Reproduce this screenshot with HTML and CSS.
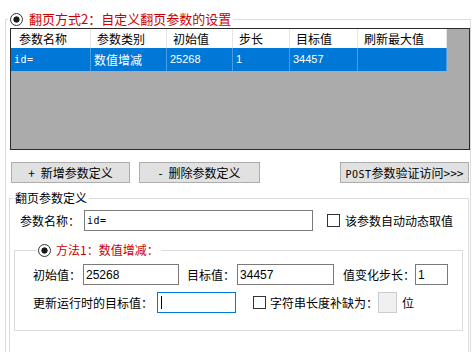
FILE: index.html
```html
<!DOCTYPE html>
<html lang="zh-CN">
<head>
    <meta charset="UTF-8">
    <title>翻页参数设置</title>
    <link rel="stylesheet" href="styles.css">
</head>
<body>
    <fieldset class="mode">
        <legend><span class="opt"><span class="radio"></span><span class="red title">翻页方式2：自定义翻页参数的设置</span></span></legend>

        <div class="list">
            <div class="row head">
                <div class="c c1">参数名称</div>
                <div class="c c2">参数类别</div>
                <div class="c c3">初始值</div>
                <div class="c c4">步长</div>
                <div class="c c5">目标值</div>
                <div class="c c6">刷新最大值</div>
            </div>
            <div class="row sel">
                <div class="c c1 mono">id=</div>
                <div class="c c2">数值增减</div>
                <div class="c c3 num">25268</div>
                <div class="c c4 num">1</div>
                <div class="c c5 num">34457</div>
                <div class="c c6"></div>
            </div>
        </div>

        <div class="buttons">
            <button class="btn add"><span class="dash">+</span>新增参数定义</button>
            <button class="btn del"><span class="dash">-</span>删除参数定义</button>
            <button class="btn post"><span class="mono">POST</span>参数验证访问&gt;&gt;&gt;</button>
        </div>

        <fieldset class="def">
            <legend>翻页参数定义</legend>
            <div class="name-row">
                <span>参数名称：</span>
                <div class="input name mono">id=</div>
                <span class="check"></span>
                <span class="check-label">该参数自动动态取值</span>
            </div>

            <fieldset class="method">
                <legend><span class="opt"><span class="radio"></span><span class="red">方法1：数值增减：</span></span></legend>
                <div class="frow">
                    <span>初始值：</span>
                    <div class="input v1">25268</div>
                    <span class="l2">目标值：</span>
                    <div class="input v2">34457</div>
                    <span class="l3">值变化步长：</span>
                    <div class="input v3">1</div>
                </div>
                <div class="frow second">
                    <span>更新运行时的目标值：</span>
                    <div class="input focus"><span class="caret"></span></div>
                    <span class="check pad"></span>
                    <span class="check-label">字符串长度补缺为：</span>
                    <div class="input off"></div>
                    <span class="unit">位</span>
                </div>
            </fieldset>
        </fieldset>
    </fieldset>
</body>
</html>
```

FILE: styles.css
```css
body {
    margin: 0;
    width: 474px;
    height: 352px;
    overflow: hidden;
    background: #fff;
    color: #000;
    font-family: "Noto Sans CJK SC", "Liberation Sans", sans-serif;
    font-size: 12px;
    line-height: 16px;
}
fieldset {
    margin: 0;
    padding: 0;
    min-width: 0;
    border: 1px solid #dcdcdc;
}
legend {
    padding: 0 2px;
    line-height: 16px;
}
.opt {
    display: inline-flex;
    align-items: center;
    height: 16px;
    vertical-align: top;
}
.radio {
    width: 13px;
    height: 13px;
    box-sizing: border-box;
    border: 1px solid #333;
    border-radius: 50%;
    background: radial-gradient(circle, #1a1a1a 0 2.8px, #fff 3.4px);
    margin-right: 5px;
}
.red {
    color: #cc0000;
}
.title {
    font-size: 13px;
    margin-left: 1px;
}
.mono {
    font-family: "DejaVu Sans Mono", monospace;
    font-size: 10px;
    font-weight: normal;
    letter-spacing: 0.5px;
}
.num {
    font-family: "Liberation Sans", sans-serif;
    font-size: 11px;
}

/* outer group */
.mode {
    margin: 11px 3px 0 5px;
    padding: 0 0 0 2px;
}
.list {
    margin: 1px 0 0 2px;
    height: 122px;
    box-sizing: border-box;
    border: 1px solid #2b2b2b;
    background: #ababab;
}
.row {
    display: flex;
}
.c {
    box-sizing: border-box;
    white-space: nowrap;
    overflow: hidden;
}
.c1 { width: 80px; }
.c2 { width: 76px; }
.c3 { width: 66px; }
.c4 { width: 57px; }
.c5 { width: 68px; }
.c6 { width: 89px; }
.head .c {
    height: 19px;
    line-height: 19px;
    background: #fff;
    border-right: 1px solid #e5e5e5;
    padding-left: 6px;
}
.head .c1 {
    padding-left: 8px;
}
.sel .c {
    height: 23px;
    line-height: 23px;
    background: #0078d7;
    color: #fff;
    border-right: 1px solid #4c9be0;
    padding-left: 3px;
}

.buttons {
    display: flex;
    margin: 12px 1px 0 3px;
}
.btn {
    height: 21px;
    box-sizing: border-box;
    border: 1px solid #adadad;
    background: #e1e1e1;
    font: inherit;
    line-height: 19px;
    padding: 0;
    color: #000;
}
.add { width: 119px; }
.del { width: 121px; margin-left: 9px; }
.post { width: 129px; margin-left: auto; }
.dash {
    margin-right: 6px;
}

/* parameter group */
.def {
    margin: 7px 1px 0 1px;
    padding: 0 0 40px 0;
}
.def > legend {
    margin-left: 3px;
}
.name-row {
    display: flex;
    align-items: center;
    height: 21px;
    margin-top: 4px;
    padding-left: 10px;
}
.input {
    display: flex;
    align-items: center;
    height: 21px;
    box-sizing: border-box;
    border: 1px solid #7a7a7a;
    background: #fff;
    padding-left: 2px;
    font-family: "Liberation Sans", sans-serif;
    font-size: 12px;
}
.name {
    width: 229px;
    margin-left: 4px;
    font-family: "DejaVu Sans Mono", monospace;
    font-size: 10px;
}
.check {
    width: 13px;
    height: 13px;
    box-sizing: border-box;
    border: 1px solid #333;
    background: #fff;
    margin-left: 14px;
    margin-right: 5px;
}

.method {
    margin: 11px 5px 0 4px;
    padding: 6px 0 17px 18px;
}
.method > legend {
    margin-left: 3px;
}
.frow {
    display: flex;
    align-items: center;
    height: 21px;
}
.frow.second {
    margin-top: 7px;
}
.v1 { width: 96px; margin-left: 2px; }
.l2 { margin-left: 8px; }
.v2 { width: 97px; margin-left: 2px; }
.l3 { margin-left: 9px; }
.v3 { width: 33px; }
.focus {
    width: 79px;
    margin-left: 4px;
    border-color: #0078d7;
}
.caret {
    width: 1px;
    height: 13px;
    background: #000;
    margin-left: 1px;
}
.check.pad {
    margin-left: 17px;
    margin-right: 4px;
}
.off {
    width: 19px;
    background: #f0f0f0;
    border-color: #cccccc;
}
.unit {
    margin-left: 5px;
}
```
